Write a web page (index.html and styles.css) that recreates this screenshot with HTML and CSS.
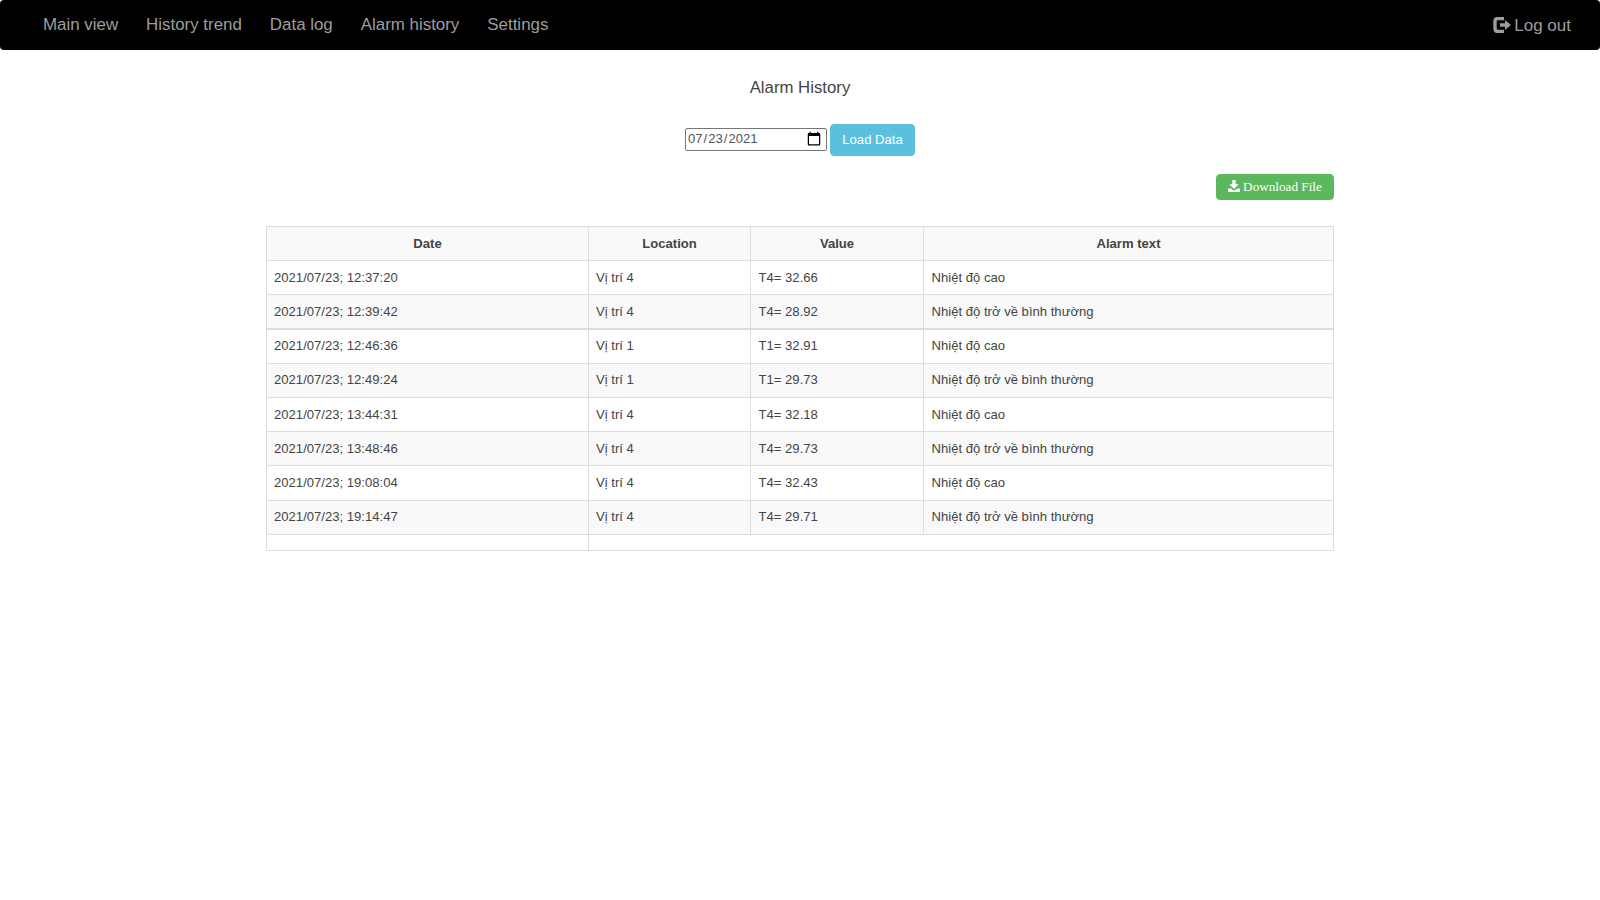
FILE: index.html
```html
<!DOCTYPE html>
<html lang="en">
<head>
    <meta charset="UTF-8">
    <meta name="viewport" content="width=device-width, initial-scale=1.0">
    <title>Alarm History</title>
    <link rel="stylesheet" href="styles.css">
</head>
<body>
    <nav class="navbar">
        <ul class="nav">
            <li><a href="#">Main view</a></li>
            <li><a href="#">History trend</a></li>
            <li><a href="#">Data log</a></li>
            <li><a href="#">Alarm history</a></li>
            <li><a href="#">Settings</a></li>
        </ul>
        <a class="logout" href="#">
            <svg class="logout_icon" viewBox="0 0 18 16" width="18" height="16">
                <path d="M11 1.500H5Q2 1.500 2 4.500V11.500Q2 14.500 5 14.500H11" fill="none" stroke="currentColor" stroke-width="3.400"/>
                <path d="M7 6.200H12V3L18 8L12 13V9.800H7Z" fill="currentColor"/>
            </svg>
            Log out
        </a>
    </nav>

    <div class="container">
        <h4 class="title">Alarm History</h4>

        <div class="filter">
            <input class="date" type="date" value="2021-07-23">
            <button class="btn btn_info">Load Data</button>
        </div>

        <div class="download">
            <button class="btn btn_success">
                <svg viewBox="0 0 14 14" width="12" height="12">
                    <path d="M5 0H9V5H12.500L7 10.500L1.500 5H5Z" fill="currentColor"/>
                    <path d="M0 10H3.500L5.500 12H8.500L10.500 10H14V14H0Z" fill="currentColor"/>
                </svg>
                Download File
            </button>
        </div>

        <table class="table">
            <colgroup>
                <col class="c_date">
                <col class="c_location">
                <col class="c_value">
                <col>
            </colgroup>
            <thead>
                <tr>
                    <th>Date</th>
                    <th>Location</th>
                    <th>Value</th>
                    <th>Alarm text</th>
                </tr>
            </thead>
            <tbody>
                <tr><td>2021/07/23; 12:37:20</td><td>Vị trí 4</td><td>T4= 32.66</td><td>Nhiệt độ cao</td></tr>
                <tr class="odd thick"><td>2021/07/23; 12:39:42</td><td>Vị trí 4</td><td>T4= 28.92</td><td>Nhiệt độ trở về bình thường</td></tr>
                <tr><td>2021/07/23; 12:46:36</td><td>Vị trí 1</td><td>T1= 32.91</td><td>Nhiệt độ cao</td></tr>
                <tr class="odd"><td>2021/07/23; 12:49:24</td><td>Vị trí 1</td><td>T1= 29.73</td><td>Nhiệt độ trở về bình thường</td></tr>
                <tr><td>2021/07/23; 13:44:31</td><td>Vị trí 4</td><td>T4= 32.18</td><td>Nhiệt độ cao</td></tr>
                <tr class="odd"><td>2021/07/23; 13:48:46</td><td>Vị trí 4</td><td>T4= 29.73</td><td>Nhiệt độ trở về bình thường</td></tr>
                <tr><td>2021/07/23; 19:08:04</td><td>Vị trí 4</td><td>T4= 32.43</td><td>Nhiệt độ cao</td></tr>
                <tr class="odd"><td>2021/07/23; 19:14:47</td><td>Vị trí 4</td><td>T4= 29.71</td><td>Nhiệt độ trở về bình thường</td></tr>
                <tr class="empty"><td></td><td colspan="3"></td></tr>
            </tbody>
        </table>
    </div>
</body>
</html>
```

FILE: styles.css
```css
*{
    padding: 0;
    margin: 0;
    box-sizing: border-box;
}
ul{
    list-style: none;
}
a{
    text-decoration: none;
}
body{
    font-family: "Liberation Sans", Arial, sans-serif;
    font-size: 13.100px;
    color: #444;
    background-color: #fff;
}
.navbar{
    height: 50px;
    background-color: #000;
    border-radius: 4px;
    display: flex;
    justify-content: space-between;
    align-items: center;
    padding: 0 29px 0 43px;
}
.nav{
    display: flex;
    gap: 28px;
    margin-top: -1px;
}
.nav a{
    color: #9d9d9d;
    font-size: 16.900px;
}
.logout{
    color: #9d9d9d;
    font-size: 17px;
    display: flex;
    align-items: center;
    gap: 3px;
    padding-top: 2px;
}
.logout_icon{
    margin-top: -2px;
}
.container{
    width: 1068px;
    margin: 0 auto;
}
.title{
    font-size: 16.800px;
    font-weight: 400;
    text-align: center;
    margin-top: 28px;
    line-height: 20px;
}
.filter{
    display: flex;
    justify-content: center;
    align-items: center;
    gap: 3px;
    margin-top: 26px;
}
.date{
    width: 142px;
    height: 23px;
    margin-bottom: 2px;
    font-family: "Liberation Sans", Arial, sans-serif;
    font-size: 13.100px;
    color: #555;
    padding: 0 2px 1px 1px;
    border: 1px solid #767676;
    border-radius: 2px;
    background-color: #fff;
}
.date::-webkit-calendar-picker-indicator{
    width: 16px;
    height: 16px;
    padding: 0;
    margin: 0 2px 0 0;
}
.btn{
    border: 1px solid transparent;
    border-radius: 4px;
    color: #fff;
}
.btn_info{
    width: 85px;
    height: 32px;
    padding-bottom: 2px;
    background-color: #5bc0de;
    border-color: #5bc0de;
    font-family: "Liberation Sans", Arial, sans-serif;
    font-size: 13.100px;
}
.download{
    display: flex;
    justify-content: flex-end;
    margin-top: 18px;
}
.btn_success{
    width: 118px;
    height: 26px;
    background-color: #5cb85c;
    border-color: #5cb85c;
    font-family: "Liberation Serif", "Times New Roman", serif;
    font-size: 13.200px;
    display: flex;
    justify-content: center;
    align-items: center;
    gap: 3px;
}
.btn_success svg{
    margin-top: -3px;
}
.table{
    width: 100%;
    margin-top: 26px;
    border-collapse: collapse;
    table-layout: fixed;
}
.c_date{
    width: 322px;
}
.c_location{
    width: 162px;
}
.c_value{
    width: 173px;
}
.table th,
.table td{
    border: 1px solid #ddd;
    padding: 0 7.500px;
    height: 34.200px;
    line-height: 20px;
}
.table td:nth-child(-n+2){
    padding-left: 7px;
}
.table th{
    text-align: center;
    font-weight: 700;
    background-color: #f9f9f9;
}
.table .odd td{
    background-color: #f9f9f9;
}
.table .thick td{
    border-bottom: 2px solid #ddd;
}
.table .empty td{
    height: 16.500px;
}
```
